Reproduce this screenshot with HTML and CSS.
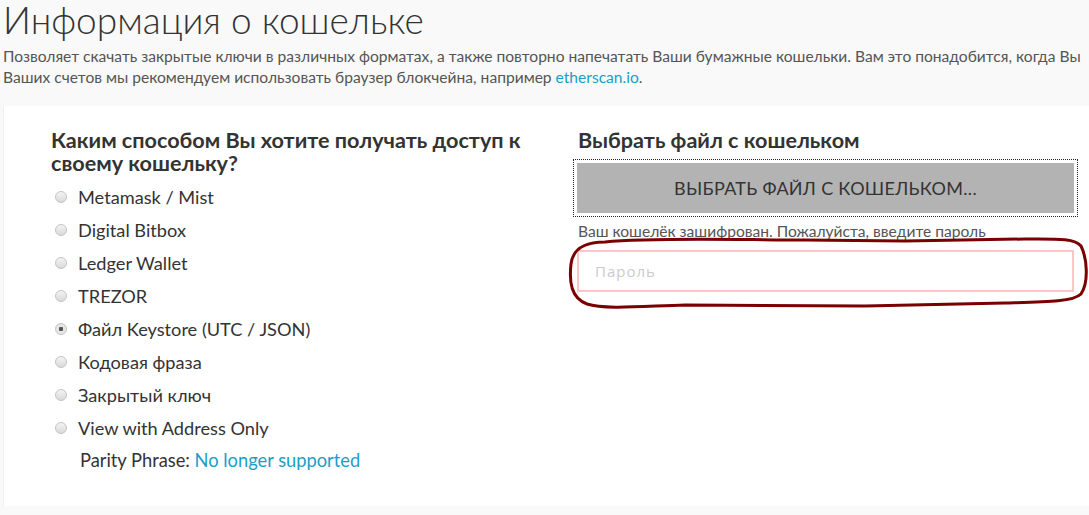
FILE: index.html
```html
<!DOCTYPE html>
<html lang="ru">
<head>
    <meta charset="UTF-8">
    <meta name="viewport" content="width=device-width, initial-scale=1.0">
    <title>Информация о кошельке</title>
    <link rel="stylesheet" href="styles.css">
</head>
<body>
    <div class="page">
        <h1 class="page-title">Информация о кошельке</h1>
        <p class="page-desc">Позволяет скачать закрытые ключи в различных форматах, а также повторно напечатать Ваши бумажные кошельки. Вам это понадобится, когда Вы<br>Ваших счетов мы рекомендуем использовать браузер блокчейна, например <a href="#">etherscan.io</a>.</p>

        <div class="card">
            <div class="col">
                <h3 class="col-title">Каким способом Вы хотите получать доступ к своему кошельку?</h3>
                <label class="option"><input type="radio" name="access"> Metamask / Mist</label>
                <label class="option"><input type="radio" name="access"> Digital Bitbox</label>
                <label class="option"><input type="radio" name="access"> Ledger Wallet</label>
                <label class="option"><input type="radio" name="access"> TREZOR</label>
                <label class="option"><input type="radio" name="access" checked> Файл Keystore (UTC / JSON)</label>
                <label class="option"><input type="radio" name="access"> Кодовая фраза</label>
                <label class="option"><input type="radio" name="access"> Закрытый ключ</label>
                <label class="option"><input type="radio" name="access"> View with Address Only</label>
                <p class="parity">Parity Phrase: <a href="#">No longer supported</a></p>
            </div>

            <div class="col col-file">
                <h3 class="col-title">Выбрать файл с кошельком</h3>
                <button class="file-button">Выбрать файл с кошельком...</button>
                <p class="hint">Ваш кошелёк зашифрован. Пожалуйста, введите пароль</p>
                <input type="password" class="password" placeholder="Пароль">

                <!-- пометка от руки вокруг поля пароля -->
                <svg class="scribble" width="528" height="84" viewBox="0 0 528 84">
                    <path d="M 40 10 C 20 10, 8 16, 6 32 C 4 50, 6 66, 22 72 C 40 78, 80 74, 120 73 L 300 74 L 440 71 C 480 70, 508 70, 516 62 C 524 50, 522 26, 516 14 C 510 6, 490 7, 460 7 L 340 9 L 240 8 C 180 8, 90 5, 40 10 Z" fill="none" stroke="#7a0000" stroke-width="3" stroke-linejoin="round"/>
                </svg>
            </div>
        </div>
    </div>
</body>
</html>
```

FILE: styles.css
```css
/* общая раскладка */
html {
    overflow: hidden;
}

body {
    margin: 0;
    background-color: #ececec;
    font-family: Lato, 'Open Sans', sans-serif;
    color: #333;
}

.page {
    background-color: #f9f9f9;
    padding: 0 0 9px 3px;
}

a {
    color: #1a9ec8;
    text-decoration: none;
}

.page-title {
    margin: 0;
    font-size: 37px;
    font-weight: 300;
    line-height: 40px;
    color: #333;
}

.page-desc {
    margin: 6px 0 18px;
    font-size: 15.6px;
    line-height: 21px;
    color: #555;
    white-space: nowrap;
}

/* карточка с двумя колонками */
.card {
    background-color: #fff;
    border-left: 1px solid #f0f0f0;
    display: grid;
    grid-template-columns: 496px 496px;
    column-gap: 30px;
    padding: 23px 15px 30px 47px;
}

.col {
    position: relative;
}

.col-title {
    margin: 0 0 5px;
    font-size: 21.6px;
    font-weight: 700;
    line-height: 23px;
    color: #333;
}

.option {
    display: flex;
    align-items: center;
    height: 33px;
    font-size: 18.2px;
    color: #333;
}

.option input[type="radio"] {
    appearance: none;
    -webkit-appearance: none;
    width: 12px;
    height: 12px;
    margin: 0 11px 0 4px;
    border: 1px solid #c4c4c4;
    border-radius: 50%;
    background: linear-gradient(#f4f4f4, #d9d9d9);
    box-sizing: border-box;
}

.option input[type="radio"]:checked {
    background: radial-gradient(circle, #555 0 2px, #e6e6e6 2.5px);
}

.parity {
    margin: 0;
    padding-left: 29px;
    height: 32px;
    line-height: 32px;
    font-size: 18.3px;
    color: #333;
}

/* выбор файла */
.col-file {
    padding-left: 1px;
}

.col-file .col-title {
    margin-bottom: 11px;
}

.file-button {
    display: block;
    width: 497px;
    height: 50px;
    margin-left: -1px;
    background-color: #b3b3b3;
    border: none;
    outline: 1px dotted #222;
    outline-offset: 3px;
    font-family: Lato, 'Open Sans', sans-serif;
    font-size: 18px;
    letter-spacing: 0.3px;
    text-transform: uppercase;
    color: #333;
    cursor: pointer;
}

.hint {
    margin: 8px 0 0;
    font-size: 15.6px;
    line-height: 20px;
    color: #555;
}

.password {
    display: block;
    width: 497px;
    height: 42px;
    margin: 9px 0 0 -1px;
    padding: 0 16px;
    border: 2px solid #fcc6c6;
    background-color: #fff;
    font-family: 'Open Sans', sans-serif;
    font-size: 15px;
    letter-spacing: 1px;
    box-sizing: border-box;
}

.password::placeholder {
    color: #ccc;
}

.scribble {
    position: absolute;
    left: -12px;
    top: 103px;
    pointer-events: none;
}
```
